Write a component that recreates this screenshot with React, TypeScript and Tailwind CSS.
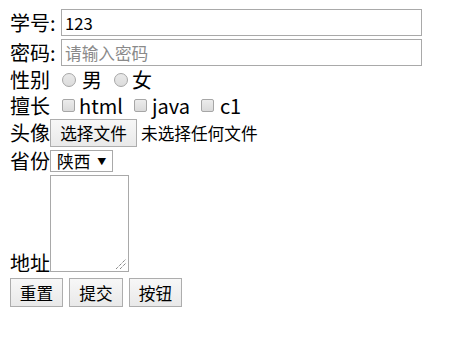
import React from "react";

const font = { fontFamily: '"Noto Sans CJK SC", "Noto Sans", sans-serif' };

function Radio() {
  return (
    <span className="inline-block w-[14px] h-[14px] rounded-full border border-[#a6a6a6] bg-gradient-to-b from-[#e9e9e9] to-[#dcdcdc] shrink-0" />
  );
}

function Check() {
  return (
    <span className="inline-block w-[13px] h-[13px] rounded-[2px] border border-[#a6a6a6] bg-gradient-to-b from-[#ececec] to-[#dadada] shrink-0" />
  );
}

function Btn({ children, w }: { children: React.ReactNode; w: string }) {
  return (
    <button
      type="button"
      className={`${w} border border-[#adadad] bg-gradient-to-b from-[#f7f7f7] to-[#e9e9e9] text-[16.67px] leading-[20px] text-black flex items-center justify-center`}
      style={font}
    >
      {children}
    </button>
  );
}

export default function App() {
  return (
    <div className="bg-white w-[453px] h-[357px] pt-[9px] pl-[10px] text-[20px] text-black" style={font}>
      <div className="flex items-center h-[27px]">
        <span className="w-[51px] leading-[22px]">学号:</span>
        <div className="w-[361px] h-[27px] border border-[#a9a9a9] px-[3px] flex items-center text-[16.67px] leading-[20px]">123</div>
      </div>
      <div className="flex items-center h-[27px] mt-[3px]">
        <span className="w-[51px] leading-[22px]">密码:</span>
        <div className="w-[361px] h-[27px] border border-[#a9a9a9] px-[3px] flex items-center text-[16.67px] leading-[20px] text-[#8a8a8a]">请输入密码</div>
      </div>
      <div className="flex items-center h-[26px] mt-[1px] leading-[22px]">
        <span className="w-[52px]">性别</span>
        <Radio />
        <span className="ml-[6px]">男</span>
        <span className="ml-[12px] flex"><Radio /></span>
        <span className="ml-[4px]">女</span>
      </div>
      <div className="flex items-center h-[25px] leading-[22px]">
        <span className="w-[52px]">擅长</span>
        <Check />
        <span className="ml-[4px]">html</span>
        <span className="ml-[11px] flex"><Check /></span>
        <span className="ml-[5px]">java</span>
        <span className="ml-[11px] flex"><Check /></span>
        <span className="ml-[6px]">c1</span>
      </div>
      <div className="flex items-center h-[28px] mt-[1px]">
        <span className="w-[40px] leading-[22px]">头像</span>
        <Btn w="w-[87px] h-[28px]">选择文件</Btn>
        <span className="ml-[4px] text-[16.67px] leading-[20px]">未选择任何文件</span>
      </div>
      <div className="flex items-center h-[22px] mt-[3px]">
        <span className="w-[40px] leading-[22px]">省份</span>
        <div className="w-[63px] h-[22px] border border-[#a9a9a9] flex items-center pl-[6px] text-[16.67px] leading-[20px]">
          <span>陕西</span>
          <span className="ml-[7px] text-[9px] leading-none">▼</span>
        </div>
      </div>
      <div className="flex items-end mt-[3px]">
        <span className="w-[40px] leading-[20px] mb-[-1px]">地址</span>
        <div className="relative w-[79px] h-[97px] border border-[#a9a9a9]">
          <svg className="absolute right-[1px] bottom-[1px]" width="12" height="12" viewBox="0 0 12 12">
            <line x1="1" y1="11" x2="11" y2="1" stroke="#555" strokeWidth="1" strokeDasharray="1 1" />
            <line x1="5" y1="11" x2="11" y2="5" stroke="#555" strokeWidth="1" strokeDasharray="1 1" />
          </svg>
        </div>
      </div>
      <div className="flex items-center mt-[6px] gap-[6px]">
        <Btn w="w-[53px] h-[29px]">重置</Btn>
        <Btn w="w-[54px] h-[29px]">提交</Btn>
        <Btn w="w-[53px] h-[29px]">按钮</Btn>
      </div>
    </div>
  );
}
